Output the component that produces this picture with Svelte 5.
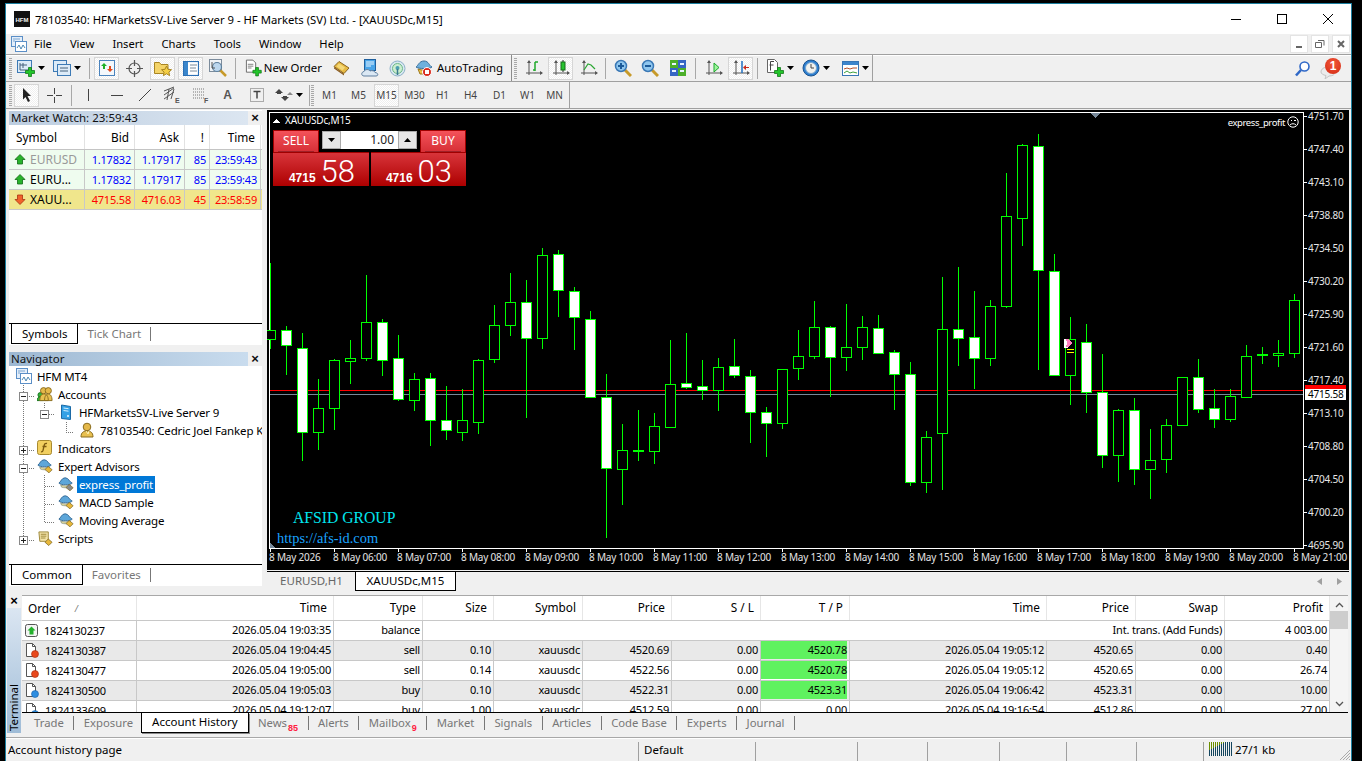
<script lang="ts">
	// MT4 terminal window: toolbars, market watch, navigator, chart, terminal
	// chart candles: [bodyTop, bodyBottom, high, low, filled]; k-th candle sits at x = 270 + 16k
	const candles: [number, number, number, number, number][] = [
		[330, 339, 263, 349, 0], [330, 345, 326, 375, 1], [348, 432, 333, 461, 1], [408, 432, 379, 450, 0],
		[360, 408, 359, 430, 0], [358, 361, 340, 384, 0], [322, 358, 275, 361, 0], [322, 360, 319, 376, 1],
		[358, 399, 335, 401, 1], [379, 400, 373, 411, 0], [378, 420, 373, 446, 1], [420, 430, 386, 440, 1],
		[420, 432, 389, 441, 0], [360, 422, 359, 434, 0], [325, 359, 305, 363, 0], [302, 325, 273, 336, 0],
		[302, 338, 280, 418, 1], [255, 338, 248, 349, 0], [254, 290, 250, 317, 1], [291, 317, 287, 350, 1],
		[319, 397, 311, 397, 1], [397, 468, 374, 538, 1], [450, 469, 424, 505, 0], [450, 451, 410, 461, 1],
		[426, 451, 413, 464, 0], [384, 427, 340, 428, 0], [383, 387, 333, 389, 1], [386, 390, 360, 400, 1],
		[367, 390, 358, 411, 0], [366, 375, 339, 378, 1], [376, 412, 370, 443, 1], [412, 423, 407, 457, 1],
		[369, 423, 369, 429, 0], [356, 368, 330, 380, 0], [327, 356, 301, 359, 0], [327, 357, 326, 397, 1],
		[347, 357, 304, 371, 0], [327, 347, 316, 360, 0], [328, 353, 315, 353, 1], [352, 374, 350, 410, 1],
		[374, 482, 362, 486, 1], [437, 482, 431, 493, 0], [329, 433, 277, 490, 0], [329, 338, 267, 366, 1],
		[337, 358, 291, 389, 1], [306, 358, 300, 366, 0], [216, 306, 173, 308, 0], [145, 218, 144, 246, 0],
		[146, 270, 134, 370, 1], [271, 375, 254, 375, 1], [339, 375, 317, 405, 0], [342, 392, 324, 413, 1],
		[392, 455, 354, 468, 1], [410, 455, 409, 482, 0], [410, 469, 398, 485, 1], [460, 469, 429, 499, 0],
		[425, 459, 419, 473, 0], [377, 425, 377, 426, 0], [377, 409, 359, 413, 1], [408, 419, 389, 428, 1],
		[396, 419, 389, 422, 0], [356, 397, 345, 397, 0], [354, 355, 347, 364, 1], [353, 355, 340, 367, 0],
		[300, 353, 294, 358, 0]
	];

	const prices = ['4751.70', '4747.40', '4743.10', '4738.80', '4734.50', '4730.20', '4725.90', '4721.60', '4717.40', '4713.10', '4708.80', '4704.50', '4700.20', '4695.90'];
	const times = ['8 May 2026', '8 May 06:00', '8 May 07:00', '8 May 08:00', '8 May 09:00', '8 May 10:00', '8 May 11:00', '8 May 12:00', '8 May 13:00', '8 May 14:00', '8 May 15:00', '8 May 16:00', '8 May 17:00', '8 May 18:00', '8 May 19:00', '8 May 20:00', '8 May 21:00'];

	const watch = [
		{ sym: 'EURUSD', bid: '1.17832', ask: '1.17917', spr: '85', time: '23:59:43', up: true, cls: 'dim' },
		{ sym: 'EURU...', bid: '1.17832', ask: '1.17917', spr: '85', time: '23:59:43', up: true, cls: '' },
		{ sym: 'XAUU...', bid: '4715.58', ask: '4716.03', spr: '45', time: '23:58:59', up: false, cls: 'hot' }
	];

	const history = [
		{ kind: 'bal', order: '1824130237', open: '2026.05.04 19:03:35', type: 'balance', note: 'Int. trans. (Add Funds)', profit: '4 003.00' },
		{ kind: 'sell', order: '1824130387', open: '2026.05.04 19:04:45', type: 'sell', size: '0.10', sym: 'xauusdc', price: '4520.69', sl: '0.00', tp: '4520.78', hit: true, close: '2026.05.04 19:05:12', cprice: '4520.65', swap: '0.00', profit: '0.40' },
		{ kind: 'sell', order: '1824130477', open: '2026.05.04 19:05:00', type: 'sell', size: '0.14', sym: 'xauusdc', price: '4522.56', sl: '0.00', tp: '4520.78', hit: true, close: '2026.05.04 19:05:12', cprice: '4520.65', swap: '0.00', profit: '26.74' },
		{ kind: 'buy', order: '1824130500', open: '2026.05.04 19:05:03', type: 'buy', size: '0.10', sym: 'xauusdc', price: '4522.31', sl: '0.00', tp: '4523.31', hit: true, close: '2026.05.04 19:06:42', cprice: '4523.31', swap: '0.00', profit: '10.00' },
		{ kind: 'buy', order: '1824133609', open: '2026.05.04 19:12:07', type: 'buy', size: '1.00', sym: 'xauusdc', price: '4512.59', sl: '0.00', tp: '0.00', hit: false, close: '2026.05.04 19:16:54', cprice: '4512.86', swap: '0.00', profit: '27.00' }
	];

	const termTabs = ['Trade', 'Exposure', 'Account History', 'News', 'Alerts', 'Mailbox', 'Market', 'Signals', 'Articles', 'Code Base', 'Experts', 'Journal'];
	const timeframes = [['M1', 3, false], ['M5', 4, false], ['M15', 3, true], ['M30', 3, false], ['H1', 3, false], ['H4', 3, false], ['D1', 4, false], ['W1', 3, false], ['MN', 2, false]] as const;
</script>

{#snippet hat(gem = '#e8b83a')}
	<svg width="18" height="16" viewBox="0 0 18 16">
		<path d="M1 7c2-1 3-6 7-6s5 5 8 6c-2 2.500-13 2.500-15 0z" fill="#5da6d9" stroke="#2f6593" />
		<path d="M3 9c3 1.500 8 1.500 11 0l-1 2.500c-3 1-6 1-9 0z" fill="#e6dca0" stroke="#6f7f70" stroke-width=".7" />
		<path d="M12.500 8.500l4.500 3.700-3.500 3.500-4.500-3.700z" fill={gem} stroke="#7a6420" stroke-width=".8" />
	</svg>
{/snippet}

{#snippet axes()}
	<path d="M4 2v14M1 14h16" stroke="#555" fill="none" />
	<path d="M4 1l-2 3h4zM18 14l-3-2v4z" fill="#555" />
{/snippet}

{#snippet chartDoc()}
	<rect x=".5" y=".5" width="14" height="12" fill="#dcebf8" stroke="#3d7ab5" />
	<path d="M3 3v7h9M3 5h7M6 3v5" stroke="#45607a" fill="none" />
{/snippet}

{#snippet plus(x = 8, y = 7)}
	<path transform="translate({x} {y})" d="M3.500.5h3v3h3v3h-3v3h-3v-3h-3v-3h3z" fill="#22c52a" stroke="#127a18" stroke-width=".8" />
{/snippet}

{#snippet mag(sign = '')}
	<svg width="18" height="18" viewBox="0 0 18 18">
		<path d="M11 11l6 6" stroke="#c79a2a" stroke-width="3" />
		<circle cx="7" cy="7" r="5.500" fill="#8fc6ee" stroke="#3a78b5" stroke-width="1.500" />
		<path d={sign === '+' ? 'M4 7h6M7 4v6' : 'M4 7h6'} stroke="#1b5a99" stroke-width="2" />
	</svg>
{/snippet}

{#snippet caret()}
	<svg class="caret" width="7" height="4" viewBox="0 0 7 4"><path d="M0 0h7L3.500 4z" fill="#000" /></svg>
{/snippet}

{#snippet wave(size = 16)}
	<svg width={size} height={size} viewBox="0 0 16 16">
		<rect x=".5" y=".5" width="11" height="10" fill="#e3eefa" stroke="#5b8fc7" />
		<rect x="4.500" y="5.500" width="11" height="10" fill="#fff" stroke="#5b8fc7" />
		<path d="M6 12l2-3 2 4 2-4 2 3" stroke="#4b88b5" fill="none" />
		<path d="M2 3h7M2 5h2" stroke="#7da6d0" />
	</svg>
{/snippet}

{#snippet userIcon(size = 14)}
	<svg width={size} height={size + 2} viewBox="0 0 14 16">
		<circle cx="7" cy="5" r="3.800" fill="#e4b84a" stroke="#8a6c1e" />
		<path d="M1 15c0-5 3-6 6-6s6 1 6 6z" fill="#e8c050" stroke="#8a6c1e" />
		<path d="M6 9l2 3 1-3" stroke="#fff2b8" fill="none" />
	</svg>
{/snippet}

<div class="window">
	<header class="titlebar">
		<svg class="logo" width="16" height="16" viewBox="0 0 16 16">
			<rect width="16" height="16" fill="#111" />
			<text x="8" y="10.500" text-anchor="middle" class="logo-text">HFM</text>
		</svg>
		<span class="title">78103540: HFMarketsSV-Live Server 9 - HF Markets (SV) Ltd. - [XAUUSDc,M15]</span>
		<div class="caption">
			<svg width="46" height="30" viewBox="0 0 46 30"><path d="M18 15.500h10" stroke="#000" /></svg>
			<svg width="46" height="30" viewBox="0 0 46 30"><rect x="18.500" y="10.500" width="9" height="9" fill="none" stroke="#000" /></svg>
			<svg width="46" height="30" viewBox="0 0 46 30"><path d="M18 10l10 10M28 10L18 20" stroke="#000" /></svg>
		</div>
	</header>

	<nav class="menubar">
		<span class="menu-icon">{@render wave(16)}</span>
		<span class="menu">File</span>
		<span class="menu">View</span>
		<span class="menu">Insert</span>
		<span class="menu">Charts</span>
		<span class="menu">Tools</span>
		<span class="menu">Window</span>
		<span class="menu">Help</span>
		<div class="mdi">
			<span><svg width="8" height="8" viewBox="0 0 8 8"><path d="M1 7h6" stroke="#666" stroke-width="2" /></svg></span>
			<span><svg width="10" height="10" viewBox="0 0 10 10"><path d="M3 1.500h6v5M.5 3.500h6v5h-6z" stroke="#666" fill="none" /></svg></span>
			<span><svg width="8" height="8" viewBox="0 0 8 8"><path d="M1 1l6 6M7 1L1 7" stroke="#666" stroke-width="2" /></svg></span>
		</div>
	</nav>

	<div class="bar bar-main">
		<i class="grip"></i>
		<div class="drop ml2">
			<svg width="18" height="17" viewBox="0 0 18 17">{@render chartDoc()}{@render plus()}</svg>
			{@render caret()}
		</div>
		<div class="drop">
			<svg width="18" height="17" viewBox="0 0 18 17">
				<rect x=".5" y=".5" width="13" height="11" fill="#dcebf8" stroke="#3d7ab5" />
				<rect x="4.500" y="4.500" width="13" height="11" fill="#dcebf8" stroke="#3d7ab5" />
				<path d="M7 8h8M7 11h8" stroke="#45607a" />
			</svg>
			{@render caret()}
		</div>
		<i class="sep ml3"></i>
		<div class="tb on ml4">
			<svg width="16" height="16" viewBox="0 0 16 16">
				<rect x=".5" y=".5" width="15" height="15" fill="#f4f8fc" stroke="#4a83bd" />
				<path d="M5 3l3 3H6v3H4V6H2z" fill="#1fb12a" />
				<path d="M11 12L8 9h2V6h2v3h2z" fill="#e24a1c" />
			</svg>
		</div>
		<div class="tb ml3">
			<svg width="17" height="17" viewBox="0 0 17 17">
				<circle cx="8.500" cy="8.500" r="5.500" fill="none" stroke="#555" stroke-width="1.200" />
				<path d="M8.500 0v6M8.500 11v6M0 8.500h6M11 8.500h6" stroke="#555" stroke-width="1.200" />
			</svg>
		</div>
		<div class="tb on ml3">
			<svg width="18" height="17" viewBox="0 0 18 17">
				<path d="M.5 2.500h5l1.500 2h7v9H.5z" fill="#f4d468" stroke="#a98522" />
				<path d="M12.500 6l1.500 3.300 3.500.4-2.600 2.400.7 3.500-3.100-1.800-3.100 1.800.7-3.500-2.600-2.400 3.500-.4z" fill="#f5cf45" stroke="#a98522" />
			</svg>
		</div>
		<div class="tb on ml3">
			<svg width="16" height="15" viewBox="0 0 16 15">
				<rect x=".5" y=".5" width="15" height="14" fill="#fff" stroke="#2b6fb4" stroke-width="1.200" />
				<rect x="1" y="1" width="4" height="13" fill="#3a86cc" />
				<path d="M7 4h7M7 7h6M7 10h7" stroke="#7b8a99" />
			</svg>
		</div>
		<div class="tb ml2">
			<svg width="18" height="18" viewBox="0 0 18 18">
				<rect x=".5" y=".5" width="12" height="12" fill="#f0f3f6" stroke="#7c8c9c" />
				<path d="M11 11l6 6" stroke="#c79a2a" stroke-width="2.500" />
				<circle cx="8" cy="8" r="4.500" fill="#bcd7ee" stroke="#5d7f9c" stroke-width="1.200" />
				<path d="M3 3v6h3" stroke="#555" fill="none" />
			</svg>
		</div>
		<i class="sep ml5"></i>
		<div class="tb-text ml9">
			<svg width="18" height="18" viewBox="0 0 18 18">
				<path d="M1.500.5h7l3 3v10h-10z" fill="#fff" stroke="#666" />
				<path d="M3 5h6M3 7h6M3 9h4" stroke="#7a7a7a" />
				{@render plus(8, 8)}
			</svg>
			<span>New Order</span>
		</div>
		<div class="tb ml7">
			<svg width="17" height="16" viewBox="0 0 17 16">
				<path d="M6 1.500l10 6.500-5 5.500-10-7z" fill="#e6ba44" stroke="#8a6520" />
				<path d="M6 3.500l6 4-2.500 3-6-4z" fill="#f4d878" />
				<path d="M1 7l10 7v1.500L1 8.500z" fill="#8a5a1c" />
			</svg>
		</div>
		<div class="tb ml3">
			<svg width="18" height="18" viewBox="0 0 18 18">
				<rect x="3.500" y=".5" width="11" height="11" fill="#4aa5e8" stroke="#1f5f9c" />
				<path d="M5 3h8M5 5h8M5 7h5" stroke="#e8f5ff" />
				<path d="M3 17c-3 0-3-4 0-4.500 1-2.500 5-2.500 6-.5 2-1 5 0 5 1.500 3 0 4 3.500 1 3.500z" fill="#dbe8f4" stroke="#5f7f9f" />
			</svg>
		</div>
		<div class="tb ml3">
			<svg width="17" height="17" viewBox="0 0 17 17">
				<circle cx="8.500" cy="8.500" r="7.500" fill="#d8e8f0" stroke="#8cb0c8" />
				<circle cx="8.500" cy="8.500" r="5" fill="#cdeed0" stroke="#6db88a" />
				<circle cx="8.500" cy="8" r="2" fill="#4c9fb0" />
				<path d="M8.500 9v6" stroke="#3a7a90" stroke-width="1.500" />
			</svg>
		</div>
		<div class="tb-text auto ml5">
			<svg width="18" height="18" viewBox="0 0 18 18">
				<path d="M1 8c2-1 3-6 8-6s5 5 8 6c-2 2-14 2-16 0z" fill="#6fb0dc" stroke="#3a6f9c" />
				<path d="M3 10c4 1.500 8 1.500 12 0l-2 5H5z" fill="#eec24a" stroke="#9c7a20" />
				<circle cx="12" cy="13" r="4.500" fill="#d92a1c" stroke="#fff" />
				<rect x="10" y="11" width="4" height="4" fill="#fff" />
			</svg>
			<span>AutoTrading</span>
		</div>
		<i class="sep sep-dark ml6"></i>
		<i class="grip ml2"></i>
		<div class="tb ml4">
			<svg width="18" height="18" viewBox="0 0 18 18">{@render axes()}<path d="M10 3v9M10 3h3M8 11h2" stroke="#1fa82a" stroke-width="1.500" fill="none" /></svg>
		</div>
		<div class="tb on ml2">
			<svg width="18" height="18" viewBox="0 0 18 18">{@render axes()}<path d="M11 1v12" stroke="#222" /><rect x="9" y="3" width="4" height="8" fill="#27c32f" stroke="#166d1b" /></svg>
		</div>
		<div class="tb ml3">
			<svg width="18" height="18" viewBox="0 0 18 18">{@render axes()}<path d="M4 11l4-6 3 1 4 4" stroke="#2aa632" stroke-width="1.200" fill="none" /></svg>
		</div>
		<i class="sep ml4"></i>
		<div class="tb ml4">{@render mag('+')}</div>
		<div class="tb ml2">{@render mag('-')}</div>
		<div class="tb ml3">
			<svg width="16" height="16" viewBox="0 0 16 16">
				<rect width="8" height="8" fill="#4caf2a" /><rect x="8" width="8" height="8" fill="#3666c4" />
				<rect y="8" width="8" height="8" fill="#3666c4" /><rect x="8" y="8" width="8" height="8" fill="#4caf2a" />
				<path d="M2 4h4M10 4h4M2 11h4M10 11h4" stroke="#e8f4ff" stroke-width="2" />
			</svg>
		</div>
		<i class="sep ml5"></i>
		<div class="tb ml5">
			<svg width="18" height="18" viewBox="0 0 18 18">{@render axes()}<path d="M9 4l5 4.500-5 4.500z" fill="#9cf59c" stroke="#1ca82a" /></svg>
		</div>
		<div class="tb on ml2">
			<svg width="18" height="18" viewBox="0 0 18 18">{@render axes()}<path d="M10 2v12" stroke="#1f6fc0" stroke-width="1.500" /><path d="M17 8h-3V6l-3 2.500 3 2.500V9h3z" fill="#c92a1a" /></svg>
		</div>
		<i class="sep ml4"></i>
		<div class="drop ml5">
			<svg width="18" height="18" viewBox="0 0 18 18">
				<path d="M1.500.5h7l3 3v10h-10z" fill="#fff" stroke="#666" />
				<path d="M8 2.500H4.500v9M3.500 6h4" stroke="#444" fill="none" />
				{@render plus(8, 8)}
			</svg>
			{@render caret()}
		</div>
		<div class="drop">
			<svg width="18" height="18" viewBox="0 0 18 18">
				<circle cx="9" cy="9" r="8" fill="#2e7fd0" stroke="#1c548e" />
				<circle cx="9" cy="9" r="5.500" fill="#f2f2ee" stroke="#7aa7cf" />
				<path d="M9 5v4h3" stroke="#444" fill="none" />
			</svg>
			{@render caret()}
		</div>
		<div class="drop drop-last ml4">
			<svg width="17" height="15" viewBox="0 0 17 15">
				<rect x=".5" y=".5" width="16" height="14" fill="#fff" stroke="#3775b5" />
				<rect x="1" y="1" width="15" height="3" fill="#3c85cc" />
				<path d="M2 8l3-1 3 1 3-1 4 0" stroke="#b5502a" fill="none" />
				<path d="M2 12l3-2 3 2 3-1 4 1" stroke="#3ca03c" fill="none" />
			</svg>
			{@render caret()}
		</div>
		<div class="quick">
			<svg width="15" height="16" viewBox="0 0 15 16">
				<circle cx="9.500" cy="5.500" r="4.500" fill="#fff" stroke="#2f68c7" stroke-width="1.600" />
				<path d="M6 9l-5 5.500" stroke="#2f68c7" stroke-width="2.600" />
			</svg>
			<span class="bell">
				<svg width="17" height="15" viewBox="0 0 17 15">
					<path d="M8 3c4 0 7 2 7 5s-3 4-6 4l-4 3 1-3.500c-3-.5-5-2-5-3.500C1 5 4 3 8 3z" fill="#ececec" stroke="#c4c4c4" />
				</svg>
				<b class="badge">1</b>
			</span>
		</div>
	</div>

	<div class="bar bar-tools">
		<i class="grip"></i>
		<div class="tb on ml2">
			<svg width="12" height="16" viewBox="0 0 12 16"><path d="M2 1l8 8H6.500l2.500 5-2 1-2.500-5L2 12.500z" fill="#222" /></svg>
		</div>
		<div class="tb ml3">
			<svg width="17" height="17" viewBox="0 0 17 17"><path d="M8.500 1v6M8.500 10v6M1 8.500h6M10 8.500h6" stroke="#444" /></svg>
		</div>
		<i class="sep ml4"></i>
		<div class="tb ml4"><svg width="3" height="14"><path d="M1.500 1v12" stroke="#444" /></svg></div>
		<div class="tb ml3"><svg width="14" height="3"><path d="M1 1.500h12" stroke="#444" /></svg></div>
		<div class="tb ml3"><svg width="14" height="14"><path d="M1 13L13 1" stroke="#444" /></svg></div>
		<div class="tb ml2">
			<svg width="18" height="18" viewBox="0 0 18 18">
				<path d="M1 9L11 2M1 13l10-7M1 5l10-4M4 14L6 3M8 13l3-10" stroke="#555" fill="none" />
				<text x="12" y="17" class="tool-mark">E</text>
			</svg>
		</div>
		<div class="tb ml4">
			<svg width="18" height="18" viewBox="0 0 18 18">
				<path d="M1 3h12M1 6h12M1 9h12M1 12h12" stroke="#777" stroke-dasharray="1 1" />
				<text x="12" y="17" class="tool-mark">F</text>
			</svg>
		</div>
		<div class="tb ml2"><span class="glyph-a">A</span></div>
		<div class="tb ml4">
			<svg width="14" height="14" viewBox="0 0 14 14">
				<rect x=".5" y=".5" width="13" height="13" fill="none" stroke="#666" stroke-dasharray="1 1" />
				<path d="M3.500 3.500h7M7 3.500v7" stroke="#444" stroke-width="1.500" />
			</svg>
		</div>
		<div class="drop ml3">
			<svg width="18" height="14" viewBox="0 0 18 14">
				<path d="M4 1l4 4H6v1H2V5H0z" fill="#444" />
				<path d="M10 13l-4-4h2V8h4v1h2z" fill="#444" />
				<path d="M15 4l-3 3h6z" fill="#888" />
			</svg>
			{@render caret()}
		</div>
		<i class="sep ml1"></i>
		<i class="grip ml1"></i>
		{#each timeframes as [label, gap, on]}
			<div class="tb tf ml{gap}" class:on>{label}</div>
		{/each}
	</div>

	<main class="main">
		<aside class="side">
			<section class="panel watch">
				<div class="panel-head idle"><span>Market Watch: 23:59:43</span><b class="x">×</b></div>
				<div class="mw-grid mw-head">
					<div class="left">Symbol</div><div>Bid</div><div>Ask</div><div>!</div><div>Time</div>
				</div>
				{#each watch as row}
					<div class="mw-grid mw-row {row.cls}">
						<div class="left sym">
							<svg width="12" height="11" viewBox="0 0 12 11">
								{#if row.up}
									<path d="M6 .5l5 5H8.500v4.500h-5V5.500H1z" fill="#29b32c" stroke="#116b15" stroke-width=".8" />
								{:else}
									<path d="M6 10.500l5-5H8.500V1h-5v4.500H1z" fill="#f0632a" stroke="#a83410" stroke-width=".8" />
								{/if}
							</svg>
							<span>{row.sym}</span>
						</div>
						<div class="num">{row.bid}</div><div class="num">{row.ask}</div><div class="num">{row.spr}</div><div class="num">{row.time}</div>
					</div>
				{/each}
				<div class="grow"></div>
				<div class="minitabs">
					<span class="minitab active">Symbols</span>
					<span class="minitab">Tick Chart</span>
				</div>
			</section>

			<section class="panel navigator">
				<div class="panel-head"><span>Navigator</span><b class="x">×</b></div>
				<div class="tree">
					<svg class="tree-lines" width="253" height="190" viewBox="9 366 253 190">
						<g stroke="#777" stroke-dasharray="1 1" fill="none">
							<path d="M23.500 383v157M27 396.500h7M27 450.500h7M27 468.500h7M27 540.500h7" />
							<path d="M44.500 403v6M49 414.500h6M66.500 422v10M66 432.500h8" />
							<path d="M44.500 475v47M45 486.500h9M45 504.500h9M45 522.500h9" />
						</g>
						<g fill="#fff" stroke="#888">
							<rect x="19.500" y="392.500" width="8" height="8" />
							<rect x="40.500" y="410.500" width="8" height="8" />
							<rect x="19.500" y="446.500" width="8" height="8" />
							<rect x="19.500" y="464.500" width="8" height="8" />
							<rect x="19.500" y="536.500" width="8" height="8" />
						</g>
						<path d="M21 396.500h5M42 414.500h5M21 450.500h5M23.500 448v5M21 468.500h5M21 540.500h5M23.500 538v5" stroke="#222" fill="none" />
					</svg>
					<div class="node lv0"><span class="ni">{@render wave(16)}</span><span class="nt">HFM MT4</span></div>
					<div class="node lv1">
						<span class="ni">
							<svg width="17" height="16" viewBox="0 0 17 16">
								<circle cx="3.500" cy="9" r="2.500" fill="#36b33c" stroke="#17731c" />
								<path d="M0 15c0-3 2-4 3.500-4S7 12 7 15z" fill="#36b33c" stroke="#17731c" />
								<circle cx="7" cy="4.500" r="3.300" fill="#e4b84a" stroke="#8a6c1e" />
								<circle cx="12" cy="4.500" r="3.300" fill="#e4b84a" stroke="#8a6c1e" />
								<path d="M3 15c0-5 2-7 4.500-7S12 10 12 15zM8 15c0-5 2-7 4-7s4 2 4 7z" fill="#e8c050" stroke="#8a6c1e" />
							</svg>
						</span>
						<span class="nt">Accounts</span>
					</div>
					<div class="node lv2">
						<span class="ni">
							<svg width="14" height="16" viewBox="0 0 14 16">
								<path d="M2.500.5l9 1.500v13l-9-1z" transform="translate(0 .5)" fill="#33a1e6" stroke="#1c6aa6" />
								<path d="M4.500 4l5 .7M4.500 6.500l5 .7" stroke="#d6f0ff" />
								<circle cx="9" cy="12" r=".9" fill="#fff" />
							</svg>
						</span>
						<span class="nt">HFMarketsSV-Live Server 9</span>
					</div>
					<div class="node lv3"><span class="ni">{@render userIcon(14)}</span><span class="nt">78103540: Cedric Joel Fankep K</span></div>
					<div class="node lv1">
						<span class="ni">
							<svg width="16" height="16" viewBox="0 0 16 16">
								<rect x=".5" y=".5" width="14" height="14" rx="2" fill="#f2d060" stroke="#a88a30" />
								<path d="M10 3.500c-2-.5-2.500.5-3 2.500L6 10.500c-.3 1-1 1.500-2 1.200M5.500 6.500h4" stroke="#7d5a10" stroke-width="1.300" fill="none" />
							</svg>
						</span>
						<span class="nt">Indicators</span>
					</div>
					<div class="node lv1"><span class="ni">{@render hat()}</span><span class="nt">Expert Advisors</span></div>
					<div class="node lv2"><span class="ni">{@render hat('#8a8a8a')}</span><span class="nt sel">express_profit</span></div>
					<div class="node lv2"><span class="ni">{@render hat()}</span><span class="nt">MACD Sample</span></div>
					<div class="node lv2"><span class="ni">{@render hat()}</span><span class="nt">Moving Average</span></div>
					<div class="node lv1">
						<span class="ni">
							<svg width="17" height="17" viewBox="0 0 17 17">
								<path d="M2 1.500h10v10H3z" fill="#f3e3a8" stroke="#9c8638" />
								<path d="M4 4h6M4 6h6M4 8h5" stroke="#9c8638" />
								<path d="M12 9l4 3.500-3.500 3.500-4-3.500z" fill="#e8b83a" stroke="#7a6420" stroke-width=".8" />
							</svg>
						</span>
						<span class="nt">Scripts</span>
					</div>
				</div>
				<div class="minitabs">
					<span class="minitab active">Common</span>
					<span class="minitab">Favorites</span>
				</div>
			</section>
		</aside>

		<div class="workspace">
			<div class="chart">
				<svg class="plot" width="1082" height="460" viewBox="267 110 1082 460" shape-rendering="crispEdges">
					<rect x="267" y="110" width="1082" height="460" fill="#000" />
					<path d="M269.500 112v437M269 112.500h1034.500M1303.500 112v437M269 548.500h1035" stroke="#fff" fill="none" />
					<rect x="270" y="390" width="1033" height="1" fill="#ff0000" />
					<rect x="270" y="394" width="1033" height="1" fill="#778899" />
					{#each candles as [top, bot, high, low, filled], k}
						<rect x={270 + 16 * k} y={high} width="1" height={low - high} fill="#00ff00" />
						<rect x={265.500 + 16 * k} y={top + 0.5} width="10" height={bot - top} fill={filled ? '#fff' : '#000'} stroke="#00ff00" />
					{/each}
					{#each prices as p, i}
						<rect x="1304" y={116 + 33 * i} width="3" height="1" fill="#fff" />
						<text x="1308" y={120 + 33 * i} class="axis">{p}</text>
					{/each}
					<rect x="1305" y="385" width="41" height="10" fill="#ff0000" />
					<rect x="1305" y="389" width="41" height="11" fill="#fff" />
					<text x="1308" y="398" class="axis dark">4715.58</text>
					{#each times as t, i}
						<rect x={270 + 64 * i} y="549" width="1" height="3" fill="#fff" />
						<text x={269 + 64 * i} y="561" class="axis">{t}</text>
					{/each}
					<path d="M1090 113h10l-5 5z" fill="#778899" />
					<path d="M270 548v-5l6 5z" fill="#778899" />
					<path d="M273 122.500l3.500-4 3.500 4z" fill="#fff" />
					<text x="285" y="124" class="axis label">XAUUSDc,M15</text>
					<text x="1285" y="126" text-anchor="end" class="axis label ea">express_profit</text>
					<g shape-rendering="auto" fill="none" stroke="#fff">
						<circle cx="1293" cy="122" r="5.200" />
						<path d="M1290 125c1.500-1.700 4.500-1.700 6 0" />
					</g>
					<rect x="1290.500" y="119.500" width="1.500" height="1.500" fill="#fff" />
					<rect x="1294" y="119.500" width="1.500" height="1.500" fill="#fff" />
					<path d="M1064 339h3l5 4-5 5h-3z" fill="#fff" />
					<path d="M1066 339h2l4 4-4 4h-2l1-4z" fill="#ff7ec0" />
					<rect x="1067" y="349" width="7" height="1" fill="#ffff00" />
					<rect x="1067" y="352" width="7" height="1" fill="#ffff00" />
					<text x="293" y="523" class="brand">AFSID GROUP</text>
					<text x="277" y="543" class="brand url">https://afs-id.com</text>
				</svg>

				<div class="trade">
					<div class="trade-top">
						<div class="side-btn"><span>SELL</span></div>
						<div class="spin">
							<span class="spin-btn"><svg width="7" height="4"><path d="M0 0h7L3.500 4z" fill="#000" /></svg></span>
							<span class="spin-val">1.00</span>
							<span class="spin-btn"><svg width="7" height="4"><path d="M0 4h7L3.500 0z" fill="#000" /></svg></span>
						</div>
						<div class="side-btn"><span>BUY</span></div>
					</div>
					<div class="trade-bottom">
						<div class="quote"><small>4715</small><strong>58</strong></div>
						<div class="quote"><small>4716</small><strong>03</strong></div>
					</div>
				</div>
			</div>
			<div class="charttabs">
				<span class="ctab">EURUSD,H1</span>
				<span class="ctab active">XAUUSDc,M15</span>
				<span class="ctab-nav">
					<svg width="5" height="7"><path d="M5 0v7L0 3.500z" fill="#a0a0a0" /></svg>
					<svg width="5" height="7"><path d="M0 0v7l5-3.500z" fill="#a0a0a0" /></svg>
				</span>
			</div>
		</div>
	</main>

	<section class="terminal">
		<div class="term-side">
			<b class="x">×</b>
			<div class="term-title"><span>Terminal</span></div>
		</div>
		<div class="term-body">
			<div class="term-table">
				<div class="trades">
					<div class="tr th">
						<div class="left order-head">Order <em>/</em></div>
						<div>Time</div><div>Type</div><div>Size</div><div>Symbol</div><div>Price</div><div>S / L</div><div>T / P</div><div>Time</div><div>Price</div><div>Swap</div><div>Profit</div>
					</div>
					{#each history as h, i}
						<div class="tr" class:alt={i % 2 === 1}>
							<div class="left ord">
								{#if h.kind === 'bal'}
									<svg width="13" height="13" viewBox="0 0 13 13">
										<rect x=".5" y=".5" width="12" height="12" rx="2" fill="#f4f4f4" stroke="#555" />
										<path d="M6.500 2.500l4 4H8.500v4h-4v-4H2.500z" fill="#23b02c" />
									</svg>
								{:else}
									<svg width="14" height="15" viewBox="0 0 14 15">
										<path d="M1.500.5h6l3 3v10h-9z" fill="#fff" stroke="#555" />
										<path d="M7.500.5v3h3" fill="none" stroke="#555" />
										<circle cx="10" cy="11" r="3.500" fill={h.kind === 'sell' ? '#e8481c' : '#2d8de0'} stroke={h.kind === 'sell' ? '#a52c0c' : '#1a5fa5'} stroke-width=".6" />
									</svg>
								{/if}
								<span>{h.order}</span>
							</div>
							<div>{h.open}</div>
							<div>{h.type}</div>
							{#if h.note}
								<div class="note">{h.note}</div>
							{:else}
								<div>{h.size}</div><div>{h.sym}</div><div>{h.price}</div><div>{h.sl}</div>
								<div class:hit={h.hit}>{h.tp}</div>
								<div>{h.close}</div><div>{h.cprice}</div><div>{h.swap}</div>
							{/if}
							<div>{h.profit}</div>
						</div>
					{/each}
				</div>
				<div class="vscroll">
					<svg width="9" height="6" viewBox="0 0 9 6"><path d="M1 5l3.500-3.500L8 5" stroke="#555" stroke-width="1.300" fill="none" /></svg>
					<i class="thumb"></i>
					<i class="grow"></i>
					<svg width="9" height="6" viewBox="0 0 9 6"><path d="M1 1l3.500 3.500L8 1" stroke="#555" stroke-width="1.300" fill="none" /></svg>
				</div>
			</div>
			<div class="termtabs">
				{#each termTabs as tab}
					<span class="ttab" class:active={tab === 'Account History'}>
						{tab}{#if tab === 'News'}<sub>85</sub>{:else if tab === 'Mailbox'}<sub>9</sub>{/if}
					</span>
				{/each}
			</div>
		</div>
	</section>

	<footer class="status">
		<div class="cell c1">Account history page</div>
		<div class="cell c2">Default</div>
		<div class="cell c3"></div>
		<div class="cell c4"></div>
		<div class="cell c5"></div>
		<div class="cell c6"></div>
		<div class="cell c7"></div>
		<div class="cell c8"></div>
		<div class="cell c9">
			<svg width="23" height="14" viewBox="0 0 23 14" shape-rendering="crispEdges">
				{#each Array(12) as _, i}
					<rect x={i * 2} y="0" width="1" height={Math.max(0, 8 - i)} fill="#6b8e00" />
					<rect x={i * 2} y={Math.max(0, 8 - i)} width="1" height={14 - Math.max(0, 8 - i)} fill="#14465f" />
				{/each}
			</svg>
			<span>27/1 kb</span>
		</div>
		<svg class="sizer" width="14" height="14" viewBox="0 0 14 14">
			<path d="M13 3L3 13M13 6l-7 7M13 9l-4 4M13 12l-1 1" stroke="#aaa" />
		</svg>
	</footer>
</div>

<style>
	:global(body) {
		margin: 0;
		background: #000;
		overflow: hidden;
	}

	.window {
		--ui: 'Noto Sans', 'Open Sans', sans-serif;
		position: relative;
		box-sizing: border-box;
		margin: 3px 0 0 5px;
		width: 1347px;
		height: 758px;
		display: flex;
		flex-direction: column;
		background: #f0f0f0;
		border: 1px solid #1b7f9f;
		border-bottom: 0;
		font: 11.5px var(--ui);
		color: #000;
		overflow: hidden;
	}

	.titlebar {
		height: 30px;
		flex: none;
		display: flex;
		align-items: center;
		background: #fff;
		padding-left: 8px;
		font-size: 11.3px;
	}

	.logo-text {
		font: 700 6px 'Liberation Sans', sans-serif;
		fill: #f2f2f2;
	}

	.title {
		margin-left: 5px;
		white-space: nowrap;
	}

	.caption {
		margin-left: auto;
		display: flex;
	}

	.menubar {
		height: 20px;
		flex: none;
		display: flex;
		align-items: center;
		font-size: 11.2px;
		padding: 0 0 1px 5px;
		box-sizing: border-box;
		position: relative;
	}

	.menu-icon {
		display: flex;
		width: 23px;
	}

	.menu {
		margin-right: 18px;
	}

	.mdi {
		margin-left: auto;
		margin-right: 1px;
		display: flex;
		gap: 3px;
	}

	.mdi span {
		width: 16px;
		height: 16px;
		display: flex;
		align-items: center;
		justify-content: center;
		background: #fff;
		border: 1px solid #e4e4e4;
	}

	.bar {
		flex: none;
		display: flex;
		align-items: center;
		padding-left: 3px;
		box-sizing: border-box;
		position: relative;
	}

	.bar-main {
		height: 28px;
		border-top: 1px solid #a0a0a0;
		border-bottom: 1px solid #a0a0a0;
		box-shadow: inset 0 1px 0 #fff;
	}

	.bar-main::after {
		content: '';
		position: absolute;
		left: 866px;
		top: 0;
		bottom: 0;
		width: 1px;
		background: #a0a0a0;
	}

	.bar-tools {
		height: 26px;
	}

	.bar-tools::after {
		content: '';
		position: absolute;
		left: 563px;
		top: 0;
		bottom: 0;
		width: 1px;
		background: #a0a0a0;
	}

	.grip {
		width: 3px;
		height: 21px;
		flex: none;
		background: repeating-linear-gradient(#a8a8a8 0 1px, #f0f0f0 1px 2px);
	}

	.sep {
		width: 1px;
		height: 21px;
		flex: none;
		background: #a8a8a8;
	}

	.sep-dark {
		background: #8c8c8c;
		height: 26px;
	}

	.tb {
		width: 25px;
		height: 23px;
		flex: none;
		box-sizing: border-box;
		display: flex;
		align-items: center;
		justify-content: center;
	}

	.tb.on {
		background: repeating-conic-gradient(#fff 0 25%, #efefef 0 50%) 0 0 / 2px 2px;
		border: 1px solid #fff;
		outline: 1px solid #d6d6d6;
		outline-offset: -1px;
	}

	.tf {
		font-size: 10px;
		color: #444;
	}

	.drop {
		width: 36px;
		flex: none;
		box-sizing: border-box;
		padding-left: 3px;
		display: flex;
		align-items: center;
	}

	.drop-last {
		width: 30px;
	}

	.caret {
		margin-left: 3px;
		flex: none;
	}

	.tb-text {
		display: flex;
		align-items: center;
		flex: none;
		width: 77px;
		font-size: 11.4px;
		white-space: nowrap;
	}

	.tb-text span {
		margin: -1px 0 0 2px;
	}

	.tb-text.auto {
		width: 90px;
	}

	.tb-text.auto span {
		margin-left: 4px;
	}

	.ml1 { margin-left: 1px; }
	.ml2 { margin-left: 2px; }
	.ml3 { margin-left: 3px; }
	.ml4 { margin-left: 4px; }
	.ml5 { margin-left: 5px; }
	.ml6 { margin-left: 6px; }
	.ml7 { margin-left: 7px; }
	.ml9 { margin-left: 9px; }

	.quick {
		position: absolute;
		left: 1289px;
		top: 4px;
		display: flex;
		align-items: center;
		gap: 10px;
	}

	.bell {
		position: relative;
		display: flex;
		margin-top: 5px;
	}

	.badge {
		position: absolute;
		left: 5px;
		top: -6px;
		width: 16px;
		height: 16px;
		border-radius: 50%;
		background: radial-gradient(circle at 50% 35%, #f2563a, #d32a12);
		color: #fff;
		font: 700 12px 'Liberation Sans', sans-serif;
		line-height: 16px;
		text-align: center;
	}

	.tool-mark {
		font: 700 7px 'Liberation Sans', sans-serif;
		fill: #555;
	}

	.glyph-a {
		font: 700 12px 'Liberation Sans', sans-serif;
		color: #555;
	}

	.main {
		height: 486px;
		flex: none;
		display: flex;
		border-top: 1px solid #a0a0a0;
		padding: 1px 0 0 3px;
		gap: 5px;
		box-sizing: border-box;
	}

	.side {
		width: 253px;
		flex: none;
		display: flex;
		flex-direction: column;
		gap: 7px;
	}

	.panel {
		background: #fff;
		display: flex;
		flex-direction: column;
		box-sizing: border-box;
	}

	.watch {
		height: 235px;
		padding-top: 1px;
	}

	.navigator {
		height: 234px;
	}

	.panel-head {
		height: 14px;
		flex: none;
		display: flex;
		align-items: center;
		box-sizing: border-box;
		padding: 0 0 1px 2px;
		background: linear-gradient(90deg, #9db8d2, #c9dcee 239px, #f0f0f0 239px);
		line-height: 13px;
		font-size: 11.5px;
		color: #111;
	}

	.panel-head.idle {
		background: linear-gradient(90deg, #bccde0, #dce6f1 239px, #f0f0f0 239px);
	}

	.x {
		font: 700 13px 'Liberation Sans', sans-serif;
		line-height: 12px;
	}

	.panel-head .x {
		margin-left: auto;
		width: 14px;
		text-align: center;
	}

	.mw-grid {
		display: grid;
		grid-template-columns: 75px 50px 50px 25px 51px;
		flex: none;
		box-sizing: border-box;
		padding-left: 1px;
	}

	.mw-head {
		height: 25px;
		border-bottom: 1px solid #c4c4c4;
		font-size: 11.8px;
	}

	.mw-head div {
		display: flex;
		align-items: center;
		justify-content: flex-end;
		padding-right: 5px;
		border-right: 1px solid #e2e2e2;
	}

	.mw-grid .left {
		justify-content: flex-start;
		padding-left: 6px;
	}

	.mw-row {
		height: 20px;
		border-bottom: 1px solid #c8c8c8;
		background: #effcef;
	}

	.mw-row div {
		display: flex;
		align-items: center;
		justify-content: flex-end;
		padding-right: 3px;
		border-right: 1px solid #c8c8c8;
		white-space: nowrap;
		overflow: hidden;
	}

	.mw-row .sym {
		justify-content: flex-start;
		padding-left: 4px;
		gap: 4px;
		font-size: 12px;
	}

	.mw-row .num {
		color: #0000ff;
		font-size: 11px;
		letter-spacing: -0.2px;
	}

	.mw-row.dim .sym span {
		color: #999;
	}

	.mw-row.hot {
		background: #f0e68c;
	}

	.mw-row.hot .num {
		color: #ff0000;
	}

	.grow {
		flex: 1;
	}

	.minitabs {
		height: 21px;
		flex: none;
		display: flex;
		border-top: 1px solid #000;
		padding-left: 2px;
		font-size: 11.5px;
		color: #777;
		align-items: flex-start;
	}

	.minitab {
		height: 14px;
		margin-top: 3px;
		padding: 0 9px;
		border-right: 1px solid #777;
		line-height: 14px;
	}

	.minitab.active {
		height: 20px;
		margin-top: 0;
		color: #000;
		line-height: 19px;
		box-sizing: border-box;
		padding: 0 10px;
		border: 1px solid #000;
		border-top: 0;
	}

	.tree {
		position: relative;
		flex: 1;
		padding-top: 1px;
		overflow: hidden;
	}

	.tree-lines {
		position: absolute;
		left: 0;
		top: 0;
	}

	.node {
		position: relative;
		height: 18px;
		display: flex;
		align-items: center;
		white-space: nowrap;
		font-size: 11.5px;
		letter-spacing: -0.15px;
	}

	.lv0 { padding-left: 7px; }
	.lv1 { padding-left: 28px; }
	.lv2 { padding-left: 49px; }
	.lv3 { padding-left: 70px; }

	.ni {
		width: 16px;
		height: 16px;
		flex: none;
		display: flex;
		align-items: center;
		justify-content: center;
	}

	.nt {
		margin-left: 5px;
	}

	.nt.sel {
		margin-left: 3px;
		padding: 0 2px;
		height: 17px;
		line-height: 17px;
		background: #0078d7;
		color: #fff;
	}

	.workspace {
		flex: 1;
		min-width: 0;
		margin-right: 2px;
		display: flex;
		flex-direction: column;
	}

	.chart {
		position: relative;
		height: 460px;
		flex: none;
	}

	.plot {
		display: block;
	}

	.axis {
		font: 10px 'Noto Sans', sans-serif;
		letter-spacing: -0.2px;
		fill: #e6e6e6;
		shape-rendering: auto;
	}

	.axis.dark {
		fill: #000;
	}

	.axis.label {
		fill: #fff;
	}

	.axis.ea {
		font-size: 9.5px;
		letter-spacing: -0.4px;
	}

	.brand {
		font: 15.700px 'Liberation Serif', serif;
		fill: #00e5ee;
	}

	.brand.url {
		font-size: 14.400px;
		fill: #1aa3ff;
	}

	.trade {
		position: absolute;
		left: 6px;
		top: 20px;
		width: 193px;
	}

	.trade-top {
		display: flex;
		justify-content: space-between;
		height: 22px;
	}

	.side-btn {
		width: 46px;
		box-sizing: border-box;
		padding: 0 4px;
		background: linear-gradient(#f4525a, #d62f36);
		border: 1px solid #a00000;
		border-bottom: 0;
		color: #fff;
		font-size: 12px;
		text-align: center;
	}

	.side-btn span {
		display: block;
		height: 21px;
		line-height: 19px;
		box-sizing: border-box;
		border-bottom: 1px solid #a02028;
	}

	.spin {
		width: 97px;
		height: 20px;
		box-sizing: border-box;
		display: flex;
		background: #000;
		padding: 1px;
	}

	.spin-btn {
		width: 19px;
		flex: none;
		display: flex;
		align-items: center;
		justify-content: center;
		background: #e6e6e6;
		border: 1px solid #aaa;
		box-sizing: border-box;
	}

	.spin-val {
		flex: 1;
		background: #fff;
		text-align: right;
		padding-right: 4px;
		line-height: 17px;
		font-size: 12px;
		color: #222;
	}

	.trade-bottom {
		display: flex;
		justify-content: space-between;
		height: 34px;
	}

	.quote {
		width: 96px;
		box-sizing: border-box;
		display: flex;
		align-items: baseline;
		justify-content: flex-end;
		gap: 5px;
		padding-right: 14px;
		background: linear-gradient(#d8343a, #ad0000);
		border-top: 1px solid #a00000;
		color: #fff;
		line-height: 32px;
	}

	.quote:last-child {
		width: 95px;
	}

	.quote small {
		font: 700 12px 'Liberation Sans', sans-serif;
	}

	.quote strong {
		font: 300 31px Roboto, sans-serif;
	}

	.charttabs {
		flex: 1;
		display: flex;
		position: relative;
		border-top: 1px solid #000;
		margin-top: 1px;
		font-size: 11.5px;
		align-items: flex-start;
	}

	.ctab {
		width: 87px;
		height: 19px;
		flex: none;
		margin-left: 1px;
		text-align: center;
		color: #666;
		line-height: 18px;
	}

	.ctab.active {
		margin-left: 0;
		width: 101px;
		box-sizing: border-box;
		background: #fff;
		color: #000;
		border: 1px solid #000;
		border-top: 0;
	}

	.ctab-nav {
		position: absolute;
		right: 7px;
		top: 6px;
		display: flex;
		gap: 15px;
	}

	.terminal {
		height: 139px;
		flex: none;
		display: flex;
		padding-left: 1px;
		box-sizing: border-box;
	}

	.term-side {
		width: 14px;
		flex: none;
		display: flex;
		flex-direction: column;
		padding-top: 1px;
	}

	.term-side .x {
		height: 13px;
		text-align: center;
	}

	.term-title {
		flex: 1;
		background: linear-gradient(#dbe6f2, #9fbcd7);
		display: flex;
		align-items: flex-end;
		justify-content: center;
	}

	.term-title span {
		writing-mode: vertical-rl;
		transform: rotate(180deg);
		font-size: 11.5px;
		line-height: 14px;
		padding-top: 2px;
	}

	.term-body {
		flex: 1;
		min-width: 0;
		margin-left: 1px;
		margin-right: 3px;
		display: flex;
		flex-direction: column;
	}

	.term-table {
		height: 117px;
		flex: none;
		margin-top: 1px;
		display: flex;
		background: #fff;
		border-top: 1px solid #a8a8a8;
		overflow: hidden;
		box-sizing: border-box;
	}

	.trades {
		width: 1308px;
		flex: none;
	}

	.tr {
		display: grid;
		grid-template-columns: 115px 197px 89px 71px 89px 89px 89px 89px 197px 89px 89px 105px;
		height: 20px;
		box-sizing: border-box;
		border-bottom: 1px solid #c8c8c8;
		line-height: 18px;
		font-size: 11px;
		letter-spacing: -0.2px;
	}

	.tr.alt {
		background: #e9e9e9;
	}

	.tr > div {
		text-align: right;
		padding-right: 2px;
		border-right: 1px solid #c8c8c8;
		white-space: nowrap;
		box-sizing: border-box;
	}

	.tr.th {
		height: 25px;
		line-height: 23px;
		font-size: 11.8px;
		letter-spacing: 0;
	}

	.tr.th > div {
		padding-right: 6px;
		border-right-color: #e6e6e6;
	}

	.tr > .left {
		text-align: left;
		padding: 0 0 0 3px;
		display: flex;
		align-items: center;
		gap: 6px;
	}

	.tr.th > .order-head {
		padding-left: 6px;
		gap: 14px;
	}

	.order-head em {
		font-size: 9px;
		color: #777;
	}

	.tr > .note {
		grid-column: 4 / 12;
	}

	.tr > .hit {
		background: linear-gradient(#5ff25f, #5ff25f) no-repeat 0 0 / calc(100% - 2px) calc(100% - 1px);
	}

	.vscroll {
		flex: 1;
		display: flex;
		flex-direction: column;
		align-items: center;
		padding: 6px 0 5px;
		box-sizing: border-box;
		background: #f4f4f4;
	}

	.thumb {
		width: 100%;
		height: 18px;
		background: #cdcdcd;
		margin-top: 3px;
		flex: none;
	}

	.termtabs {
		height: 21px;
		flex: none;
		border-top: 1px solid #000;
		display: flex;
		padding-left: 2px;
		font-size: 11.3px;
		color: #777;
		box-sizing: border-box;
		align-items: flex-start;
	}

	.ttab {
		height: 14px;
		margin-top: 3px;
		padding: 0 9.5px;
		line-height: 14px;
		border-right: 1px solid #777;
		white-space: nowrap;
	}

	.ttab:first-child {
		padding-left: 10px;
	}

	.ttab:nth-child(2) {
		border-right: 0;
		padding-right: 8px;
	}

	.ttab.active {
		margin-top: 0;
		height: 20px;
		box-sizing: border-box;
		line-height: 18px;
		padding: 0 10px;
		background: #fff;
		color: #000;
		font-size: 11.5px;
		border: 1px solid #000;
		border-top: 0;
		box-shadow: 1px 1px 0 #888;
	}

	.ttab sub {
		color: #ff2040;
		font: 700 9px 'Liberation Sans', sans-serif;
		vertical-align: -4px;
		line-height: 0;
		margin-left: 1px;
	}

	.status {
		flex: 1;
		position: relative;
		display: flex;
		align-items: flex-end;
		border-top: 1px solid #a8a8a8;
		margin-top: 4px;
		box-shadow: inset 0 1px 0 #fff;
		font-size: 11.5px;
	}

	.cell {
		height: 19px;
		flex: none;
		box-sizing: border-box;
		border-left: 1px solid #a0a0a0;
		padding-left: 5px;
		line-height: 16px;
		display: flex;
		align-items: flex-start;
		gap: 3px;
	}

	.c1 { width: 632px; border-left: 0; padding-left: 2px; }
	.c2 { width: 117px; }
	.c3 { width: 102px; }
	.c4 { width: 70px; }
	.c5 { width: 72px; }
	.c6 { width: 67px; }
	.c7 { width: 70px; }
	.c8 { width: 67px; }
	.c9 { flex: 1; }

	.sizer {
		position: absolute;
		right: 0;
		bottom: 0;
	}
</style>
